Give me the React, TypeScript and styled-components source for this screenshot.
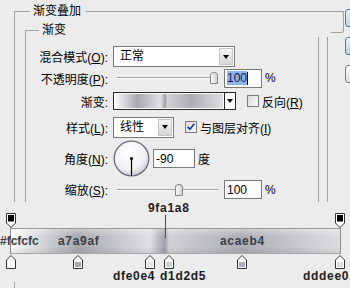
import React from 'react';
import styled, { createGlobalStyle } from 'styled-components';

const BG = '#ececec';
const RULE = '#a3a3a3';

// gradient stops of the overlay, x = offset inside the bar (px)
const stops = [
  { x: 0, color: '#fcfcfc' },
  { x: 67, color: '#a7a9af' },
  { x: 139, color: '#dfe0e4' },
  { x: 154, color: '#9fa1a8' },
  { x: 158, color: '#d1d2d5' },
  { x: 231, color: '#acaeb4' },
  { x: 329, color: '#dddee0' },
];
const BAR_SPAN = 329;

const gradientPx = stops.map(s => `${s.color} ${s.x}px`).join(', ');
const gradientPct = stops.map(s => `${s.color} ${((s.x / BAR_SPAN) * 100).toFixed(1)}%`).join(', ');

const colorMarks = [
  { x: 11, fill: '#fcfcfc' },
  { x: 78, fill: '#a7a9af' },
  { x: 150, fill: '#e3e4e8' },
  { x: 169, fill: '#d1d2d5' },
  { x: 242, fill: '#acaeb4' },
  { x: 340, fill: '#dddee0' },
];
const opacityMarks = [11, 340];

const GlobalStyle = createGlobalStyle`
  html, body { margin: 0; padding: 0; background: ${BG}; }
  body {
    font-family: 'Liberation Sans', 'Noto Sans CJK SC', sans-serif;
    font-size: 12px;
    color: #000;
  }
  * { box-sizing: border-box; }
`;

const Screen = styled.div`
  position: relative;
  display: flex;
  width: 350px;
  height: 288px;
  overflow: hidden;
  background: ${BG};
`;

const MainPanel = styled.div`
  flex: none;
  width: 345px;
  padding-top: 11px;
`;

const OuterGroup = styled.section`
  position: relative;
  width: 330px;
  height: 290px;
  margin-left: 14px;
  border-top: 1px solid ${RULE};
  border-left: 1px solid ${RULE};

  &::after {
    content: '';
    position: absolute;
    top: -1px;
    right: 0;
    width: 12px;
    height: 20px;
    border: 1px solid ${RULE};
    border-left: none;
    border-radius: 0 3px 3px 0;
  }
`;

const Legend = styled.div<{ $indent: number }>`
  display: table;
  margin: -8px 0 0 ${p => p.$indent}px;
  padding: 0 4px 0 3px;
  line-height: 14px;
  background: ${BG};
`;

const InnerGroup = styled.section`
  display: flex;
  flex-direction: column;
  height: 248px;
  margin: 12px 0 0 10px;
  border-top: 1px solid ${RULE};
  border-left: 1px solid ${RULE};
`;

const Body = styled.div`
  display: flex;
  flex: 1;
`;

const FormArea = styled.div`
  width: 293px;
  padding-top: 9px;
  border-right: 1px solid ${RULE};
`;

const RightRail = styled.div`
  width: 9px;
  border-right: 1px solid ${RULE};
`;

const Row = styled.div<{ $h: number; $mt: number }>`
  display: flex;
  align-items: center;
  height: ${p => p.$h}px;
  margin-top: ${p => p.$mt}px;
`;

const FieldLabel = styled.span`
  flex: none;
  width: 87px;
  padding-right: 5px;
  text-align: right;
  white-space: nowrap;
`;

const Text = styled.span<{ $ml?: number }>`
  margin-left: ${p => p.$ml ?? 0}px;
  white-space: nowrap;
`;

const SelectBox = styled.div<{ $w: number }>`
  display: flex;
  width: ${p => p.$w}px;
  height: 21px;
  border: 1px solid #7a7a7a;
  background: #fff;
`;

const SelectValue = styled.span`
  flex: 1;
  padding-left: 6px;
  line-height: 19px;
`;

const DropButton = styled.span`
  display: flex;
  align-items: center;
  justify-content: center;
  width: 14px;
  margin: 1px;
  border: 1px solid #c6c6c6;
  background: linear-gradient(#f6f6f6, #d6d6d6);
`;

const DropArrow = styled.span`
  width: 0;
  height: 0;
  border-left: 3px solid transparent;
  border-right: 3px solid transparent;
  border-top: 4px solid #000;
`;

const NumberField = styled.div<{ $w: number }>`
  display: flex;
  align-items: center;
  flex: none;
  width: ${p => p.$w}px;
  height: 19px;
  margin-left: 3px;
  padding-left: 2px;
  border: 1px solid #7a7a7a;
  background: #fff;
`;

const Selected = styled.span`
  background: #8fb2e7;
  color: #0b1a58;
`;

const Caret = styled.span`
  width: 1px;
  height: 13px;
  background: #000;
`;

const SliderBox = styled.div`
  position: relative;
  display: flex;
  align-items: center;
  flex: none;
  width: 108px;
  height: 100%;
  padding: 0 3px 0 4px;
`;

const Track = styled.div`
  flex: 1;
  height: 2px;
  border-top: 1px solid #a0a0a0;
  border-bottom: 1px solid #fff;
`;

const ThumbMark = styled.svg`
  position: absolute;
  top: 50%;
  margin-top: -6px;
`;

const GradientPicker = styled.div`
  display: flex;
  flex: none;
  width: 123px;
  height: 18px;
  border: 1px solid #262626;
  background: #fff;
`;

const Swatch = styled.div`
  flex: 1;
  margin: 1px;
  background: linear-gradient(90deg, ${gradientPct});
`;

const PickerButton = styled.span`
  display: flex;
  align-items: center;
  justify-content: center;
  width: 11px;
  border-left: 1px solid #262626;
`;

const BoxMark = styled.svg<{ $ml: number }>`
  flex: none;
  margin-left: ${p => p.$ml}px;
`;

const SideColumn = styled.div`
  display: flex;
  flex-direction: column;
  flex: none;
  gap: 10px;
  padding-top: 9px;
`;

const SideButton = styled.div<{ $accent?: boolean }>`
  width: 74px;
  height: 18px;
  border-radius: 3px;
  border: 1px solid ${p => (p.$accent ? '#3d82c2' : '#808080')};
  background: ${p => (p.$accent ? 'linear-gradient(#e6f2fc, #b3d5f2)' : 'linear-gradient(#fbfbfb, #dcdcdc)')};
`;

/* annotation pasted over the lower part of the dialog */
const Annotation = styled.div`
  position: absolute;
  top: 202px;
  left: 0;
  display: flex;
  flex-direction: column;
  width: 350px;
  height: 80px;
  background: ${BG};
  font-family: 'Liberation Sans', sans-serif;
  font-size: 12px;
  font-weight: 700;
  letter-spacing: 0.7px;
  color: #1d1d1d;
`;

const MarkerRow = styled.div<{ $h: number }>`
  position: relative;
  flex: none;
  height: ${p => p.$h}px;
`;

const HexTag = styled.span<{ $muted?: boolean; $tight?: boolean }>`
  position: absolute;
  line-height: 12px;
  white-space: nowrap;
  letter-spacing: ${p => (p.$tight ? '0' : '0.7px')};
  color: ${p => (p.$muted ? '#3b3d46' : '#1d1d1d')};
`;

const StopMark = styled.svg`
  position: absolute;
`;

const GradientBar = styled.div`
  position: relative;
  flex: none;
  width: 331px;
  height: 26px;
  margin-left: 10px;
  border: 1px solid #8c8c8c;
  border-top-color: #9a9a9a;
  border-bottom-color: #a8a8a8;
  background:
    linear-gradient(180deg, rgba(255, 255, 255, 0.35) 0%, rgba(255, 255, 255, 0) 32%, rgba(0, 0, 0, 0) 72%, rgba(0, 0, 0, 0.07) 100%),
    linear-gradient(90deg, ${gradientPx});
`;

const Pointer = styled.span`
  position: absolute;
  top: -14px;
  left: 154px;
  width: 1px;
  height: 23px;
  background: #4a4a4a;
`;

const Key: React.FC<{ k: string; colon?: boolean }> = ({ k, colon = true }) => (
  <>
    (<u>{k}</u>){colon ? ':' : ''}
  </>
);

const Arrow = () => <DropArrow />;

const Thumb: React.FC<{ frac: number }> = ({ frac }) => (
  <ThumbMark width="8" height="12" viewBox="0 0 8 12" style={{ left: 4 + frac * 93 }}>
    <defs>
      <linearGradient id="thumbFill" x1="0" y1="0" x2="1" y2="0">
        <stop offset="0" stopColor="#fdfdfd" />
        <stop offset="1" stopColor="#cfcfcf" />
      </linearGradient>
    </defs>
    <path d="M0.5 3 Q0.5 0.5 4 0.5 Q7.5 0.5 7.5 3 V11.5 H0.5 Z" fill="url(#thumbFill)" stroke="#868686" />
  </ThumbMark>
);

const Slider: React.FC<{ frac: number }> = ({ frac }) => (
  <SliderBox>
    <Track />
    <Thumb frac={frac} />
  </SliderBox>
);

const Check: React.FC<{ checked?: boolean; ml: number }> = ({ checked, ml }) => (
  <BoxMark $ml={ml} width="12" height="12" viewBox="0 0 12 12">
    <defs>
      <linearGradient id="boxFill" x1="0" y1="0" x2="1" y2="1">
        <stop offset="0" stopColor="#d9d9d9" />
        <stop offset="1" stopColor="#fbfbfb" />
      </linearGradient>
    </defs>
    <rect x="0.5" y="0.5" width="11" height="11" fill="url(#boxFill)" stroke="#7c7c7c" />
    {checked && <path d="M2.6 5.8 L4.9 8.2 L9.4 2.8" fill="none" stroke="#223a8c" strokeWidth="1.7" />}
  </BoxMark>
);

const Dial: React.FC<{ angle: number }> = ({ angle }) => {
  const r = 17.5;
  const rad = (angle * Math.PI) / 180;
  const x2 = 18.5 + Math.cos(rad) * r;
  const y2 = 18.5 - Math.sin(rad) * r;
  return (
    <svg width="37" height="37" viewBox="0 0 37 37">
      <defs>
        <radialGradient id="dialFill" cx="42%" cy="35%" r="70%">
          <stop offset="0" stopColor="#ffffff" />
          <stop offset="0.65" stopColor="#f3f3f5" />
          <stop offset="1" stopColor="#c4c5cf" />
        </radialGradient>
      </defs>
      <circle cx="18.5" cy="18.5" r="17.3" fill="url(#dialFill)" stroke="#6c6d7b" strokeWidth="1.3" />
      <line x1="18.5" y1="18.5" x2={x2} y2={y2} stroke="#000" strokeWidth="1.2" />
      <circle cx="18.5" cy="18.5" r="1.6" fill="#000" />
    </svg>
  );
};

const OpacityStop: React.FC<{ x: number }> = ({ x }) => (
  <StopMark width="10" height="15" viewBox="0 0 10 15" style={{ left: x - 5, top: 11 }}>
    <path d="M0.5 0.5 H9.5 V10 L5 14.5 L0.5 10 Z" fill="#fff" stroke="#333" />
    <rect x="2" y="2" width="6" height="6.5" fill="#000" />
  </StopMark>
);

const ColorStop: React.FC<{ x: number; fill: string }> = ({ x, fill }) => (
  <StopMark width="10" height="14" viewBox="0 0 10 14" style={{ left: x - 5, top: 1 }}>
    <path d="M5 0.5 L9.5 5 V13.5 H0.5 V5 Z" fill="#fff" stroke="#333" />
    <rect x="2" y="7" width="6" height="5" fill={fill} />
  </StopMark>
);

export default function App() {
  return (
    <Screen>
      <GlobalStyle />
      <MainPanel>
        <OuterGroup>
          <Legend $indent={15}>渐变叠加</Legend>
          <InnerGroup>
            <Legend $indent={13}>渐变</Legend>
            <Body>
              <FormArea>
                <Row $h={21} $mt={0}>
                  <FieldLabel>混合模式<Key k="O" /></FieldLabel>
                  <SelectBox $w={122}>
                    <SelectValue>正常</SelectValue>
                    <DropButton><Arrow /></DropButton>
                  </SelectBox>
                </Row>
                <Row $h={20} $mt={1}>
                  <FieldLabel>不透明度<Key k="P" /></FieldLabel>
                  <Slider frac={1} />
                  <NumberField $w={38}>
                    <Selected>100</Selected>
                    <Caret />
                  </NumberField>
                  <Text $ml={3}>%</Text>
                </Row>
                <Row $h={18} $mt={4}>
                  <FieldLabel>渐变:</FieldLabel>
                  <GradientPicker>
                    <Swatch />
                    <PickerButton><Arrow /></PickerButton>
                  </GradientPicker>
                  <Check ml={11} />
                  <Text $ml={3}>反向<Key k="R" colon={false} /></Text>
                </Row>
                <Row $h={20} $mt={7}>
                  <FieldLabel>样式<Key k="L" /></FieldLabel>
                  <SelectBox $w={61}>
                    <SelectValue>线性</SelectValue>
                    <DropButton><Arrow /></DropButton>
                  </SelectBox>
                  <Check checked ml={11} />
                  <Text $ml={3}>与图层对齐<Key k="I" colon={false} /></Text>
                </Row>
                <Row $h={37} $mt={3}>
                  <FieldLabel>角度<Key k="N" /></FieldLabel>
                  <Dial angle={-90} />
                  <NumberField $w={42}>-90</NumberField>
                  <Text $ml={3}>度</Text>
                </Row>
                <Row $h={19} $mt={3}>
                  <FieldLabel>缩放<Key k="S" /></FieldLabel>
                  <Slider frac={0.62} />
                  <NumberField $w={38}>100</NumberField>
                  <Text $ml={3}>%</Text>
                </Row>
              </FormArea>
              <RightRail />
            </Body>
          </InnerGroup>
        </OuterGroup>
      </MainPanel>

      <SideColumn>
        <SideButton $accent />
        <SideButton $accent />
        <SideButton />
      </SideColumn>

      <Annotation>
        <MarkerRow $h={26}>
          <HexTag style={{ left: 148, top: 0 }}>9fa1a8</HexTag>
          {opacityMarks.map(x => (
            <OpacityStop key={x} x={x} />
          ))}
        </MarkerRow>
        <GradientBar>
          <Pointer />
          <HexTag $muted $tight style={{ left: -11, top: 6 }}>#fcfcfc</HexTag>
          <HexTag $muted style={{ left: 47, top: 6 }}>a7a9af</HexTag>
          <HexTag $muted style={{ left: 209, top: 6 }}>acaeb4</HexTag>
        </GradientBar>
        <MarkerRow $h={28}>
          {colorMarks.map(m => (
            <ColorStop key={m.x} x={m.x} fill={m.fill} />
          ))}
          <HexTag style={{ left: 113, top: 16 }}>dfe0e4</HexTag>
          <HexTag style={{ left: 160, top: 16 }}>d1d2d5</HexTag>
          <HexTag style={{ left: 303, top: 16 }}>dddee0</HexTag>
        </MarkerRow>
      </Annotation>
    </Screen>
  );
}
